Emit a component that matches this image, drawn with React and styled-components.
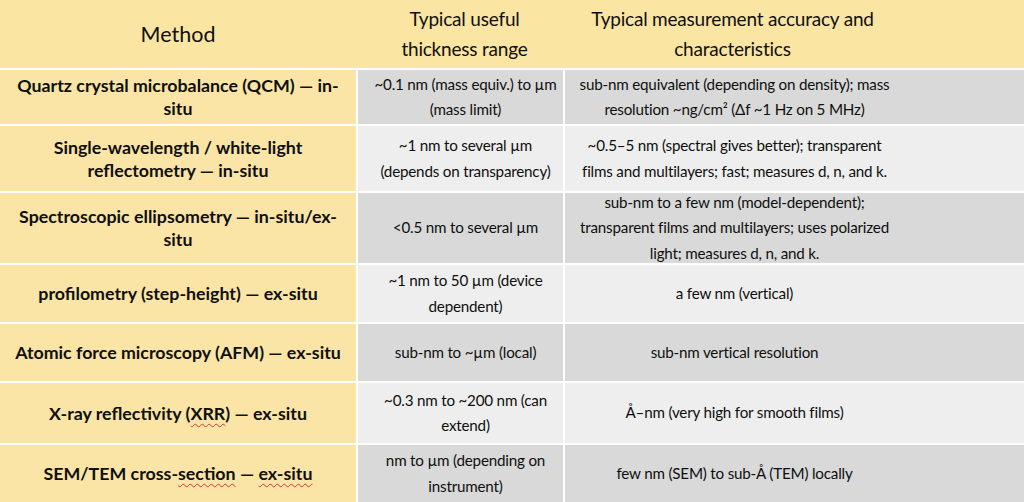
import React from "react";
import styled, { createGlobalStyle } from "styled-components";

const Global = createGlobalStyle`
  html, body { margin: 0; padding: 0; background: #ffffff; }
  body { width: 1024px; height: 502px; overflow: hidden; }
`;

const Table = styled.div`
  display: grid;
  grid-template-columns: 356px 207px 1fr;
  grid-template-rows: 68px 54px 65px 70px 57px 57px 60px 57px;
  row-gap: 2px;
  width: 1024px;
  height: 502px;
  background: #ffffff;
  font-family: "Lato", "Liberation Sans", sans-serif;
  color: #0f0f0f;
`;

const HeadCell = styled.div`
  background: #fbe5a3;
  display: flex;
  align-items: center;
  justify-content: center;
  text-align: center;
  font-size: ${(p) => (p.$col === 1 ? "21.5px" : "19px")};
  letter-spacing: ${(p) => (p.$col === 1 ? "0" : "-0.2px")};
  line-height: 30px;
  padding: ${(p) => (p.$col === 3 ? "0 130px 0 8px" : p.$col === 2 ? "0 0 0 10px" : "0")};
  white-space: nowrap;
`;

const MethodCell = styled.div`
  background: #fae5a6;
  display: flex;
  align-items: center;
  justify-content: center;
  text-align: center;
  font-weight: 700;
  font-size: 17.8px;
  line-height: 23px;
  white-space: nowrap;
`;

const DataCell = styled.div`
  background: ${(p) => (p.$shade ? "#d9d9d9" : "#eeeeee")};
  border-left: 2px solid #ffffff;
  display: flex;
  align-items: center;
  justify-content: center;
  text-align: center;
  font-size: 15.2px;
  letter-spacing: -0.2px;
  line-height: 25.5px;
  white-space: nowrap;
  padding: ${(p) => (p.$wide ? "0 128px 0 8px" : "0 0 0 10px")};
`;

const Spell = styled.span`
  text-decoration: underline wavy #e0342c;
  text-decoration-thickness: 1px;
  text-underline-offset: 3px;
`;

const lines = (arr) =>
  arr.map((l, i) => (
    <React.Fragment key={i}>
      {i > 0 && <br />}
      {l}
    </React.Fragment>
  ));

const rows = [
  {
    method: ["Quartz crystal microbalance (QCM) — in-", "situ"],
    range: ["~0.1 nm (mass equiv.) to µm", "(mass limit)"],
    acc: ["sub-nm equivalent (depending on density); mass", "resolution ~ng/cm² (Δf ~1 Hz on 5 MHz)"],
  },
  {
    method: ["Single-wavelength / white-light", "reflectometry — in-situ"],
    range: ["~1 nm to several µm", "(depends on transparency)"],
    acc: ["~0.5–5 nm (spectral gives better); transparent", "films and multilayers; fast; measures d, n, and k."],
  },
  {
    method: ["Spectroscopic ellipsometry — in-situ/ex-", "situ"],
    range: ["<0.5 nm to several µm"],
    acc: [
      "sub-nm to a few nm (model-dependent);",
      "transparent films and multilayers; uses polarized",
      "light; measures d, n, and k.",
    ],
  },
  {
    method: ["profilometry (step-height) — ex-situ"],
    range: ["~1 nm to 50 µm (device", "dependent)"],
    acc: ["a few nm (vertical)"],
  },
  {
    method: ["Atomic force microscopy (AFM) — ex-situ"],
    range: ["sub-nm to ~µm (local)"],
    acc: ["sub-nm vertical resolution"],
  },
  {
    method: [
      <>
        X-ray reflectivity (<Spell>XRR</Spell>) — ex-situ
      </>,
    ],
    range: ["~0.3 nm to ~200 nm (can", "extend)"],
    acc: ["Å–nm (very high for smooth films)"],
  },
  {
    method: [
      <>
        SEM/TEM cross-<Spell>section</Spell> — <Spell>ex-situ</Spell>
      </>,
    ],
    range: ["nm to µm (depending on", "instrument)"],
    acc: ["few nm (SEM) to sub-Å (TEM) locally"],
  },
];

export default function App() {
  return (
    <>
      <Global />
      <Table>
        <HeadCell $col={1}>Method</HeadCell>
        <HeadCell $col={2}>{lines(["Typical useful", "thickness range"])}</HeadCell>
        <HeadCell $col={3}>{lines(["Typical measurement accuracy and", "characteristics"])}</HeadCell>
        {rows.map((r, i) => (
          <React.Fragment key={i}>
            <MethodCell>
              <div>{lines(r.method)}</div>
            </MethodCell>
            <DataCell $shade={i % 2 === 0}>
              <div>{lines(r.range)}</div>
            </DataCell>
            <DataCell $shade={i % 2 === 0} $wide>
              <div>{lines(r.acc)}</div>
            </DataCell>
          </React.Fragment>
        ))}
      </Table>
    </>
  );
}
